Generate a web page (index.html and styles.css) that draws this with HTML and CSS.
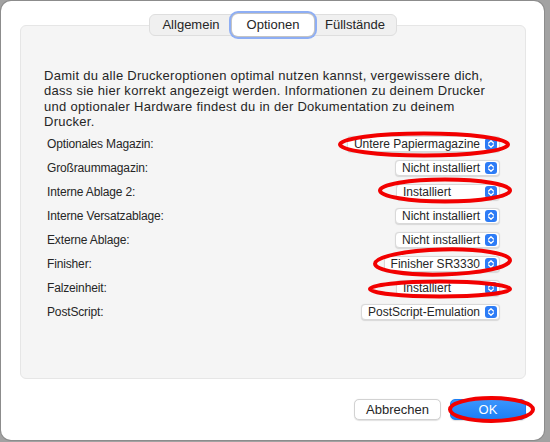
FILE: index.html
```html
<!DOCTYPE html>
<html lang="de">
    <head>
        <meta charset="UTF-8">
        <meta name="viewport" content="width=device-width, initial-scale=1.0">
        <link rel="stylesheet" href="styles.css">
        <title>Druckeroptionen</title>
    </head>

    <body>
        <div class="window">
            <div class="tabs">
                <span class="tab">Allgemein</span>
                <span class="tab selected">Optionen</span>
                <span class="tab">Füllstände</span>
            </div>

            <div class="group">
                <p class="intro">Damit du alle Druckeroptionen optimal nutzen kannst, vergewissere dich, dass sie hier korrekt angezeigt werden. Informationen zu deinem Drucker und optionaler Hardware findest du in der Dokumentation zu deinem Drucker.</p>

                <div class="row">
                    <span class="label">Optionales Magazin:</span>
                    <span class="popup">Untere Papiermagazine <svg class="stepper" viewBox="0 0 12 12"><path d="M3.6 5 L6 2.7 L8.4 5 M3.6 7 L6 9.3 L8.4 7"/></svg></span>
                </div>
                <div class="row">
                    <span class="label">Großraummagazin:</span>
                    <span class="popup">Nicht installiert <svg class="stepper" viewBox="0 0 12 12"><path d="M3.6 5 L6 2.7 L8.4 5 M3.6 7 L6 9.3 L8.4 7"/></svg></span>
                </div>
                <div class="row">
                    <span class="label">Interne Ablage 2:</span>
                    <span class="popup">Installiert <svg class="stepper" viewBox="0 0 12 12"><path d="M3.6 5 L6 2.7 L8.4 5 M3.6 7 L6 9.3 L8.4 7"/></svg></span>
                </div>
                <div class="row">
                    <span class="label">Interne Versatzablage:</span>
                    <span class="popup">Nicht installiert <svg class="stepper" viewBox="0 0 12 12"><path d="M3.6 5 L6 2.7 L8.4 5 M3.6 7 L6 9.3 L8.4 7"/></svg></span>
                </div>
                <div class="row">
                    <span class="label">Externe Ablage:</span>
                    <span class="popup">Nicht installiert <svg class="stepper" viewBox="0 0 12 12"><path d="M3.6 5 L6 2.7 L8.4 5 M3.6 7 L6 9.3 L8.4 7"/></svg></span>
                </div>
                <div class="row">
                    <span class="label">Finisher:</span>
                    <span class="popup">Finisher SR3330 <svg class="stepper" viewBox="0 0 12 12"><path d="M3.6 5 L6 2.7 L8.4 5 M3.6 7 L6 9.3 L8.4 7"/></svg></span>
                </div>
                <div class="row">
                    <span class="label">Falzeinheit:</span>
                    <span class="popup">Installiert <svg class="stepper" viewBox="0 0 12 12"><path d="M3.6 5 L6 2.7 L8.4 5 M3.6 7 L6 9.3 L8.4 7"/></svg></span>
                </div>
                <div class="row">
                    <span class="label">PostScript:</span>
                    <span class="popup">PostScript-Emulation <svg class="stepper" viewBox="0 0 12 12"><path d="M3.6 5 L6 2.7 L8.4 5 M3.6 7 L6 9.3 L8.4 7"/></svg></span>
                </div>
            </div>

            <div class="buttons">
                <span class="button">Abbrechen</span>
                <span class="button default">OK</span>
            </div>
        </div>

        <!-- red marks drawn over the screenshot -->
        <svg class="marks" viewBox="0 0 550 442">
            <ellipse cx="424" cy="144.5" rx="84" ry="11"/>
            <ellipse cx="445" cy="190.5" rx="65" ry="11"/>
            <ellipse cx="442.5" cy="262" rx="67.5" ry="12.5" transform="rotate(-1.5 442.5 262)"/>
            <ellipse cx="440" cy="289" rx="70" ry="7.5"/>
            <ellipse cx="491.5" cy="409.5" rx="41.5" ry="11.5"/>
        </svg>
    </body>
</html>
```

FILE: styles.css
```css
* { box-sizing: border-box; }

html, body { margin: 0; height: 100%; }

body {
    background-color: #a2a2a2;
    font-family: "Liberation Sans", Arial, sans-serif;
    color: #262626;
    overflow: hidden;
}

.window {
    width: 543px; height: 439px;
    margin: 1px 0 0 1px; padding: 13px 18px 0 19px;
    background: #fff; border-radius: 10px;
    box-shadow: 0 0 0 1px #8c8c8c;
}

.tabs {
    display: grid; grid-template-columns: repeat(3, 82px);
    width: 248px; height: 22px; margin: 0 auto -11px;
    position: relative; z-index: 1;
    background: #f0f0f0; border: 1px solid #dedede; border-radius: 6px;
    font-size: 13px; line-height: 20px; text-align: center;
}

.tab { border-radius: 6px; }

.tab.selected {
    background: #fff; margin: -1px 0;
    line-height: 22px;
    box-shadow: 0 0 0 1px #c4c4c4, 0 0 0 3px #8eaef4;
}

.group {
    height: 354px; padding: 42px 25px 0 23px;
    background: #f5f5f5; border: 1px solid #e6e6e6; border-radius: 6px;
}

.intro {
    margin: 0 0 3px; font-size: 13px; line-height: 15.25px;
    letter-spacing: 0.27px;
}

.row {
    display: flex; justify-content: space-between; align-items: center;
    height: 24px;
}

.label { padding-left: 3px; font-size: 12px; letter-spacing: -0.15px; }

.popup {
    display: flex; justify-content: space-between; align-items: center; gap: 5px;
    min-width: 104px; height: 16px; padding: 0 2px 0 6px;
    background: #fff; border: 1px solid #d9d9d9; border-radius: 4px;
    box-shadow: 0 0.5px 1px rgba(0, 0, 0, 0.12);
    font-size: 12px; line-height: 14px; white-space: nowrap;
}

.stepper {
    width: 12px; height: 12px; flex: none;
    background: #2d7cf6; border-radius: 3px;
}

.stepper path { fill: none; stroke: #fff; stroke-width: 1.3; stroke-linecap: round; stroke-linejoin: round; }

.buttons {
    display: flex; justify-content: flex-end; gap: 9px;
    margin-top: 20px;
}

.button {
    height: 21px; padding: 0 11px;
    background: #fff; border: 1px solid #d2d2d2; border-radius: 5px;
    box-shadow: 0 0.5px 1px rgba(0, 0, 0, 0.12);
    font-size: 13px; line-height: 19px; text-align: center;
}

.button.default {
    width: 76px; border-color: #1a7ef5;
    background: linear-gradient(#3b95fc, #1a7ff6);
    color: #fff;
}

.marks {
    position: absolute; top: 0; left: 0;
    width: 550px; height: 442px; pointer-events: none;
}

.marks ellipse { fill: none; stroke: #f20000; stroke-width: 4; }
```
